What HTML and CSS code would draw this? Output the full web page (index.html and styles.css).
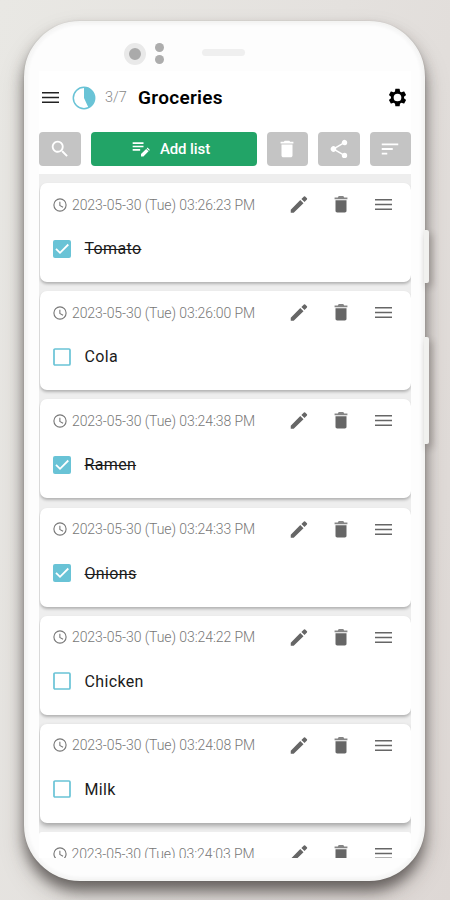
FILE: index.html
```html
<!DOCTYPE html>
<html lang="en">
<head>
<meta charset="utf-8">
<title>Groceries</title>
<link rel="stylesheet" href="styles.css">
</head>
<body>
<svg class="defs" aria-hidden="true">
  <symbol id="clock" viewBox="0 0 24 24"><path d="M12 2a10 10 0 1 0 0 20 10 10 0 0 0 0-20zm0 18.300a8.300 8.300 0 1 1 0-16.600 8.300 8.300 0 0 1 0 16.600zM12.600 7H11v6l5.200 3.100.8-1.300-4.400-2.600z"/></symbol>
  <symbol id="pencil" viewBox="0 0 24 24"><path d="M3 17.800V21h3.200L16.900 10.600l-3.500-3.500zM20.700 6.500a1 1 0 0 0 0-1.200l-2-2a1 1 0 0 0-1.300 0l-2.800 2.700 3.400 3.400z"/></symbol>
  <symbol id="trash" viewBox="0 0 24 24"><path d="M6 19c0 1.100.9 2 2 2h8c1.100 0 2-.9 2-2V7H6zM19 4h-3.500l-1-1h-5l-1 1H5v2h14z"/></symbol>
  <symbol id="bin" viewBox="0 0 24 24"><path d="M6 18.800c0 1.200.7 1.900 1.900 1.900h8.200c1.200 0 1.900-.7 1.900-1.900V7.300H6z"/><path opacity=".8" d="M19 4.300h-3.500l-1-1.500h-5l-1 1.500H5v2h14z"/></symbol>
  <symbol id="lines" viewBox="0 0 17 13"><path d="M0 1h17v1.500H0zM0 5.750h17v1.500H0zM0 10.500h17V12H0z"/></symbol>
  <symbol id="off" viewBox="0 0 18 18"><rect x="1" y="1" width="16" height="16" rx="1" fill="#fff" stroke="#69c3d6" stroke-width="1.700"/></symbol>
  <symbol id="on" viewBox="0 0 18 18"><rect width="18" height="18" rx="2" fill="#69c3d6"/><path d="M3 8.800l4 4 8.300-8.300" fill="none" stroke="#fff" stroke-width="1.800"/></symbol>
</svg>
<div class="device">
  <i class="key power"></i><i class="key volume"></i>
  <div class="phone">
    <div class="sensors"><i class="lens"></i><span class="dots"><i></i><i></i></span><i class="speaker"></i></div>
    <div class="screen">
      <header class="appbar">
        <svg class="menu"><use href="#lines"/></svg>
        <svg class="progress" viewBox="0 0 24 24"><circle cx="12" cy="12" r="10.700" fill="#fff" stroke="#69c3d6" stroke-width="1.500"/><path d="M12 1v11l4.500 9.800A11 11 0 0 0 12 1z" fill="#69c3d6"/></svg>
        <span class="count">3/7</span>
        <h1>Groceries</h1>
        <svg class="gear" viewBox="0 0 24 24"><path fill-rule="evenodd" d="M19.430 12.980c.04-.32.07-.64.07-.98s-.03-.66-.07-.98l2.110-1.650c.19-.15.24-.42.12-.64l-2-3.460c-.12-.22-.39-.3-.61-.22l-2.490 1c-.52-.4-1.080-.73-1.690-.98l-.38-2.650A.488.488 0 0 0 14 2h-4c-.25 0-.46.18-.49.42l-.38 2.650c-.61.25-1.170.59-1.690.98l-2.490-1c-.23-.09-.49 0-.61.22l-2 3.460c-.13.22-.07.49.12.64l2.110 1.650c-.04.32-.07.65-.07.98s.03.66.07.98l-2.110 1.650c-.19.15-.24.42-.12.64l2 3.460c.12.22.39.3.61.22l2.490-1c.52.4 1.080.73 1.690.98l.38 2.650c.03.24.24.42.49.42h4c.25 0 .46-.18.49-.42l.38-2.650c.61-.25 1.170-.59 1.690-.98l2.490 1c.23.09.49 0 .61-.22l2-3.460c.12-.22.07-.49-.12-.64zM12 16.400a4.400 4.400 0 1 1 0-8.800 4.400 4.400 0 0 1 0 8.800z"/></svg>
      </header>
      <div class="toolbar">
        <span class="tool"><svg viewBox="0 0 24 24"><path d="M15.500 14h-.79l-.28-.27a6.500 6.500 0 1 0-.7.700l.27.280v.79l5 4.990L20.490 19zm-6 0a4.500 4.500 0 1 1 0-9 4.500 4.500 0 0 1 0 9z"/></svg></span>
        <span class="add"><svg viewBox="0 0 24 24"><path d="M2 4h13v2H2zM2 8h13v2H2zM2 12h9v2H2zM12 18.100V21h2.900l6.200-6.200-2.900-2.900zM22.700 13.200l-2.900-2.900-1 1 2.900 2.900z"/></svg>Add list</span>
        <span class="tool"><svg><use href="#trash"/></svg></span>
        <span class="tool"><svg viewBox="0 0 24 24"><path d="M18 16.080c-.76 0-1.440.3-1.960.77L8.910 12.700a3.300 3.300 0 0 0 0-1.400l7.050-4.110A3 3 0 1 0 15 5c0 .24.040.47.090.7L8.040 9.810a3 3 0 1 0 0 4.380l7.120 4.160c-.05.210-.08.430-.08.650a2.920 2.920 0 1 0 2.920-2.920z"/></svg></span>
        <span class="tool"><svg viewBox="0 0 24 24"><path d="M3 18h6v-2H3zM3 6v2h18V6zm0 7h12v-2H3z"/></svg></span>
      </div>
      <main class="list">
        <article class="card"><div class="meta"><svg class="clock"><use href="#clock"/></svg><time>2023-05-30 (Tue) 03:26:23 PM</time><svg class="act"><use href="#pencil"/></svg><svg class="act"><use href="#bin"/></svg><svg class="drag"><use href="#lines"/></svg></div><div class="item done"><svg><use href="#on"/></svg><span>Tomato</span></div></article>
        <article class="card"><div class="meta"><svg class="clock"><use href="#clock"/></svg><time>2023-05-30 (Tue) 03:26:00 PM</time><svg class="act"><use href="#pencil"/></svg><svg class="act"><use href="#bin"/></svg><svg class="drag"><use href="#lines"/></svg></div><div class="item"><svg><use href="#off"/></svg><span>Cola</span></div></article>
        <article class="card"><div class="meta"><svg class="clock"><use href="#clock"/></svg><time>2023-05-30 (Tue) 03:24:38 PM</time><svg class="act"><use href="#pencil"/></svg><svg class="act"><use href="#bin"/></svg><svg class="drag"><use href="#lines"/></svg></div><div class="item done"><svg><use href="#on"/></svg><span>Ramen</span></div></article>
        <article class="card"><div class="meta"><svg class="clock"><use href="#clock"/></svg><time>2023-05-30 (Tue) 03:24:33 PM</time><svg class="act"><use href="#pencil"/></svg><svg class="act"><use href="#bin"/></svg><svg class="drag"><use href="#lines"/></svg></div><div class="item done"><svg><use href="#on"/></svg><span>Onions</span></div></article>
        <article class="card"><div class="meta"><svg class="clock"><use href="#clock"/></svg><time>2023-05-30 (Tue) 03:24:22 PM</time><svg class="act"><use href="#pencil"/></svg><svg class="act"><use href="#bin"/></svg><svg class="drag"><use href="#lines"/></svg></div><div class="item"><svg><use href="#off"/></svg><span>Chicken</span></div></article>
        <article class="card lifted"><div class="meta"><svg class="clock"><use href="#clock"/></svg><time>2023-05-30 (Tue) 03:24:08 PM</time><svg class="act"><use href="#pencil"/></svg><svg class="act"><use href="#bin"/></svg><svg class="drag"><use href="#lines"/></svg></div><div class="item"><svg><use href="#off"/></svg><span>Milk</span></div></article>
        <article class="card last"><div class="meta"><svg class="clock"><use href="#clock"/></svg><time>2023-05-30 (Tue) 03:24:03 PM</time><svg class="act"><use href="#pencil"/></svg><svg class="act"><use href="#bin"/></svg><svg class="drag"><use href="#lines"/></svg></div></article>
      </main>
    </div>
  </div>
</div>
</body>
</html>
```
FILE: styles.css
```css
* { box-sizing: border-box; }
body {
  margin: 0;
  height: 900px;
  overflow: hidden;
  font-family: Roboto, sans-serif;
  background: linear-gradient(105deg, #e9e8e4 0%, #e4e1de 50%, #ded8d5 100%);
}
.defs { position: absolute; width: 0; height: 0; }
svg { display: block; flex: none; fill: currentColor; }
.device { position: relative; width: 401px; margin-left: 23.500px; padding-top: 21px; }
.phone {
  position: relative;
  height: 859.500px;
  padding: 0 13.500px;
  border: 2px solid #f4f4f3;
  border-radius: 56px;
  background: #fdfdfd;
  box-shadow: 0 0 2px rgba(0,0,0,.12), 0 10px 14px rgba(45,40,38,.62), 0 14px 28px rgba(60,45,40,.15), inset 0 0 3px 2px rgba(0,0,0,.03);
}
.key {
  position: absolute;
  z-index: 1;
  left: 400.500px;
  width: 4.500px;
  border-radius: 0 2px 2px 0;
  background: #f1f1ef;
  box-shadow: 3px 4px 7px rgba(40,30,25,.3);
}
.power { top: 230px; height: 53px; }
.volume { top: 337px; height: 107px; }
.sensors { display: flex; align-items: center; height: 48px; padding: 13px 0 0 85px; }
.lens { width: 22px; height: 22px; border: 5px solid #e9e9e9; border-radius: 50%; background: #aaa; }
.dots { display: grid; gap: 3px; margin: 0 0 0 9px; }
.dots i { width: 9px; height: 9px; border-radius: 50%; background: #adadad; }
.speaker { width: 43px; height: 7px; margin: -2px 0 0 38px; border-radius: 4px; background: #efefef; }
.screen { display: flex; flex-direction: column; width: 372px; height: 787px; overflow: hidden; background: #fff; }
.appbar { display: flex; align-items: center; height: 53px; padding: 0 3px 0 3px; color: #000; }
.menu { width: 17px; height: 13px; color: #222; }
.progress { width: 24px; height: 24px; margin-left: 13px; }
.count { width: 23px; margin-left: 9px; color: #888; font-size: 14.500px; font-weight: 300; white-space: nowrap; }
h1 { flex: 1; margin: 0 0 0 10px; font-size: 19px; font-weight: 600; line-height: 24px; letter-spacing: .3px; }
.gear { width: 21px; height: 21px; }
.toolbar { display: flex; gap: 10px; height: 50px; padding-top: 7.500px; }
.tool, .add { display: flex; align-items: center; justify-content: center; height: 34.500px; border-radius: 4px; color: #fff; }
.tool { width: 41.500px; background: #c4c4c4; }
.tool svg { width: 22px; height: 22px; }
.add svg { width: 20px; height: 22px; }
.add { flex: 1; gap: 9px; padding-right: 6px; background: #22a467; font-size: 15px; font-weight: 500; letter-spacing: -.1px; }
.list {
  flex: 1;
  min-height: 0;
  padding: 9px .5px 0;
  background: #eee;
  overflow: hidden;
}
.card {
  height: 99px;
  margin-bottom: 9.200px;
  border-radius: 7px;
  background: #fff;
  box-shadow: 0 2px 3px rgba(0,0,0,.25);
}
.card.lifted { box-shadow: 0 3px 5px rgba(0,0,0,.3); }
.card.last { margin: 0 -.5px; border-radius: 3px 3px 0 0; box-shadow: none; }
.meta { display: flex; align-items: center; height: 43px; padding-left: 12.500px; color: #666; }
.clock { width: 16px; height: 16px; color: #777; }
time { width: 186px; margin-left: 4px; color: #777; font-size: 14px; font-weight: 300; letter-spacing: -.08px; white-space: nowrap; }
.act { width: 22px; height: 23px; margin-left: 30px; margin-right: -10px; }
.drag { width: 17px; height: 13px; margin-left: 33px; }
.item { display: flex; align-items: center; gap: 14px; height: 45px; padding-left: 13px; color: #1b1b1b; font-size: 16px; letter-spacing: .35px; }
.item svg { width: 18px; height: 18px; }
.done span { text-decoration: line-through; text-decoration-thickness: 1px; }
```
